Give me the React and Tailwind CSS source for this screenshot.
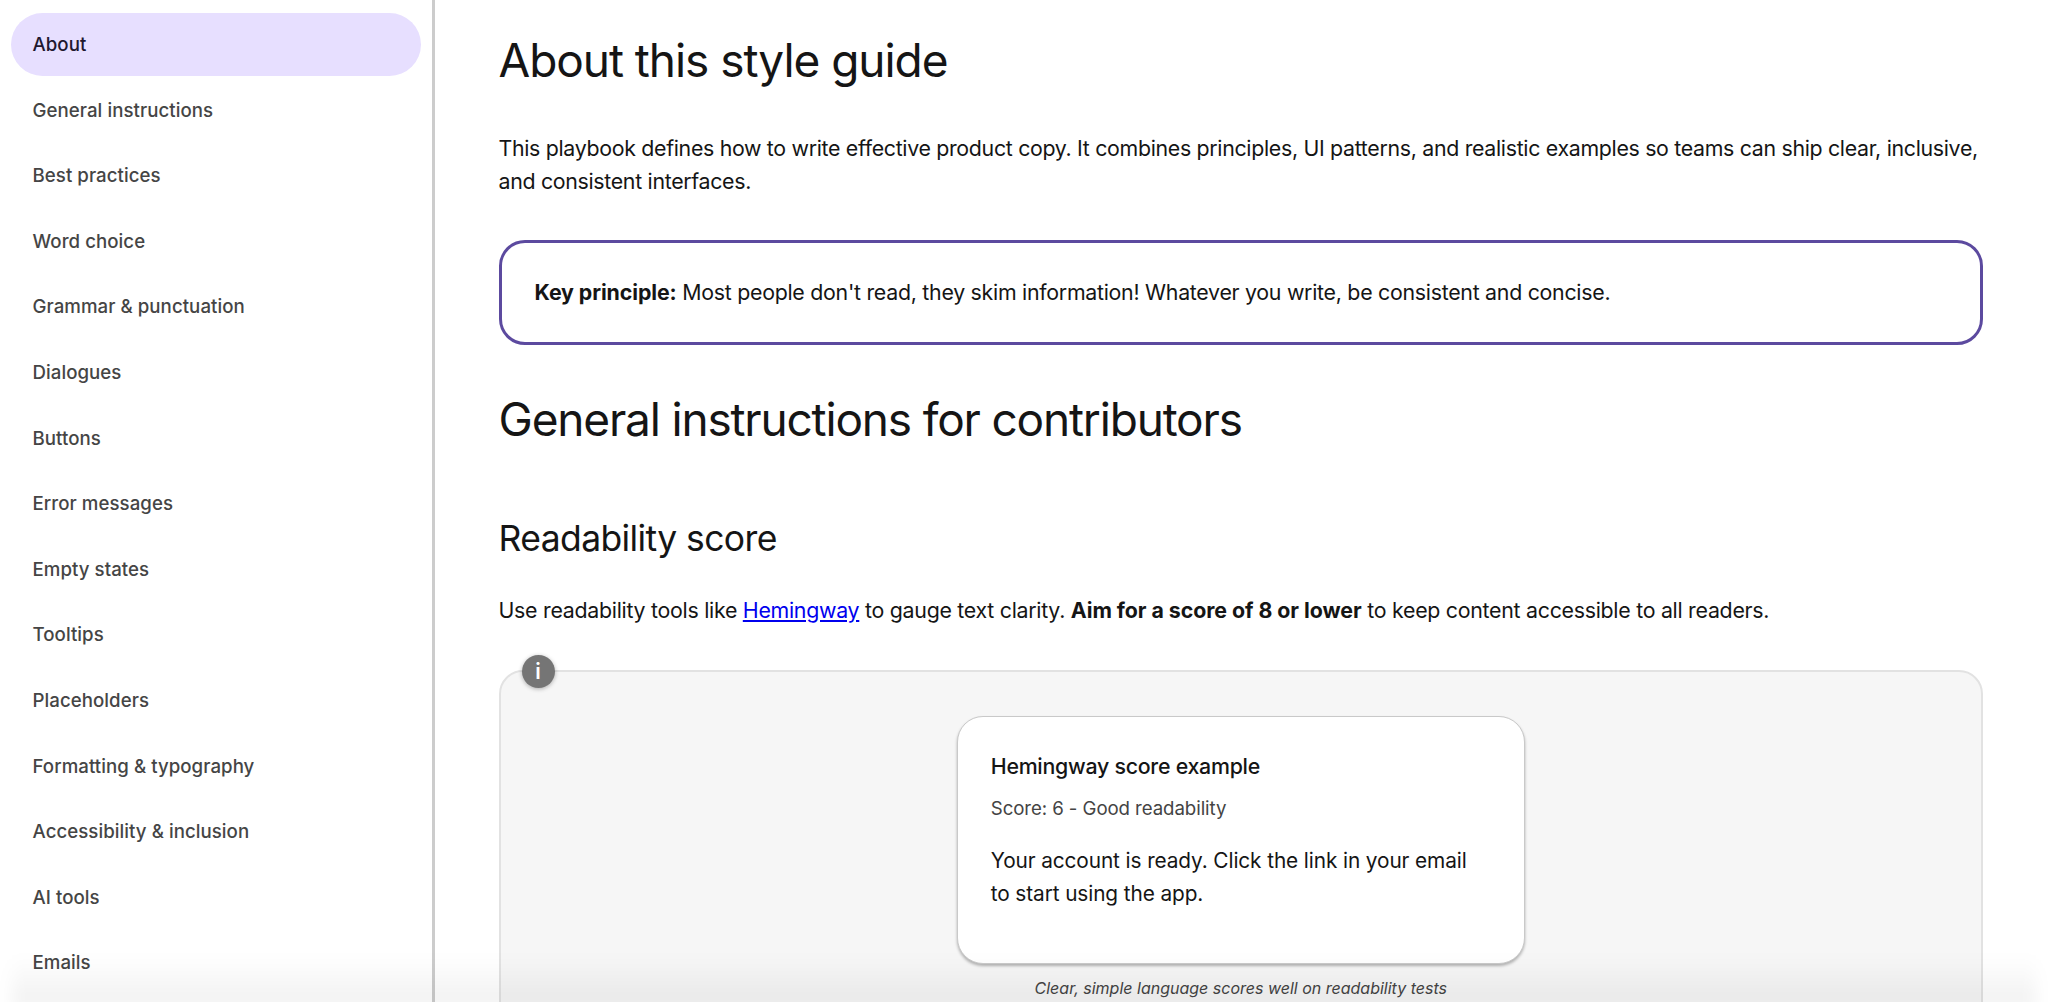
const navItems = [
  "About",
  "General instructions",
  "Best practices",
  "Word choice",
  "Grammar & punctuation",
  "Dialogues",
  "Buttons",
  "Error messages",
  "Empty states",
  "Tooltips",
  "Placeholders",
  "Formatting & typography",
  "Accessibility & inclusion",
  "AI tools",
  "Emails",
];

function Sidebar() {
  return (
    <aside className="w-[435px] h-full shrink-0 border-r-[3px] border-[#cccccc] pt-[13px] pl-[11px] pr-[11px] flex flex-col gap-[2.6px] overflow-hidden">
      {navItems.map((item, i) => (
        <a
          key={item}
          className={`h-[63px] shrink-0 flex items-center px-[21.5px] rounded-full text-[18.67px] font-medium tracking-[0.05px] ${
            i === 0 ? "bg-[#e7dfff] text-[#21182f]" : "text-[#454545] pt-[1px]"
          }`}
        >
          {item}
        </a>
      ))}
    </aside>
  );
}

export default function App() {
  return (
    <div className="relative h-screen w-full overflow-hidden flex bg-white font-['Inter','Liberation_Sans',sans-serif] text-[#151515]">
      <Sidebar />
      <main className="flex-1 min-w-0 pl-[63.5px] pr-[65px]">
        <h1 className="mt-[30px] text-[46px] leading-[60px] font-normal tracking-[-1.05px]">About this style guide</h1>
        <p className="mt-[42px] text-[21.33px] leading-[32.6px] tracking-[-0.31px]">
          This playbook defines how to write effective product copy. It combines principles, UI patterns, and realistic examples so teams can ship clear, inclusive, and consistent interfaces.
        </p>
        <div className="mt-[43px] h-[105px] flex items-center px-[33px] border-[3px] border-[#5c4a9f] rounded-[26px] text-[21.33px] tracking-[-0.27px]">
          <p>
            <strong className="font-bold tracking-[-0.1px]">Key principle:</strong> Most people don't read, they skim information! Whatever you write, be consistent and concise.
          </p>
        </div>
        <h2 className="mt-[44px] text-[46px] leading-[60px] font-normal tracking-[-1.18px]">General instructions for contributors</h2>
        <h3 className="mt-[66px] text-[35.5px] leading-[48px] font-normal tracking-[-0.6px]">Readability score</h3>
        <p className="mt-[31px] text-[21.33px] leading-[32.6px] tracking-[-0.27px]">
          Use readability tools like <a className="text-[#0000ee] underline">Hemingway</a> to gauge text clarity. <strong className="font-bold tracking-[-0.05px]">Aim for a score of 8 or lower</strong> to keep content accessible to all readers.
        </p>
        <section className="relative mt-[43px] h-[400px] bg-[#f6f6f6] border-2 border-[#e2e2e2] rounded-[24px] flex flex-col items-center pt-[44px]">
          <span className="absolute left-[21px] top-[-17px] w-[33px] h-[33px] rounded-full bg-[#757575] text-white text-[21px] font-semibold flex items-center justify-center shadow-[0_1px_4px_rgba(0,0,0,0.3)]">
            i
          </span>
          <div className="w-[568px] h-[248px] bg-white rounded-[26px] border border-[#c9c9c9] shadow-[0_2px_3px_rgba(0,0,0,0.28)] pl-[33px] pr-[48px] pt-[35px]">
            <h4 className="text-[21.33px] leading-[28px] font-medium tracking-[-0.25px]">Hemingway score example</h4>
            <p className="mt-[15px] text-[18.67px] leading-[28px] text-[#444444] tracking-[-0.08px]">Score: 6 - Good readability</p>
            <p className="mt-[21px] text-[20.8px] leading-[33px] tracking-[-0.1px]">
              Your account is ready. Click the link in your email to start using the app.
            </p>
          </div>
          <p className="mt-[13px] text-[16px] leading-[22px] italic text-[#444444]">Clear, simple language scores well on readability tests</p>
        </section>
      </main>
      <div className="absolute left-[12px] right-[12px] bottom-[-6px] h-[52px] bg-gradient-to-t from-black/[0.06] to-transparent blur-sm pointer-events-none" />
    </div>
  );
}
